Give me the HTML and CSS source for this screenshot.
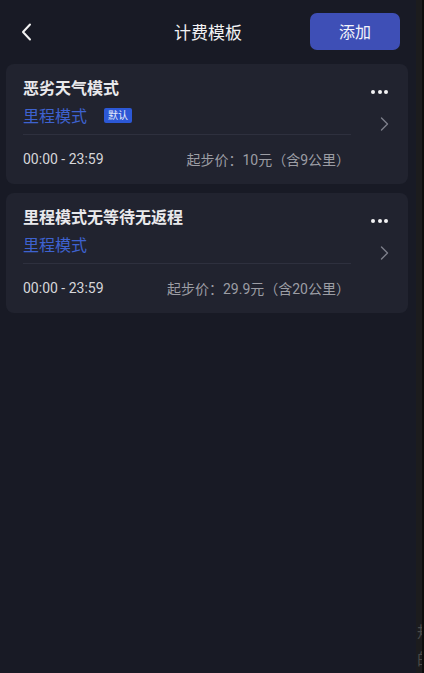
FILE: index.html
```html
<!DOCTYPE html>
<html lang="zh">
<head>
<meta charset="utf-8">
<link rel="stylesheet" href="styles.css">
</head>
<body>
<div class="screen">
  <main class="app">
    <header class="topbar">
      <div class="back">
        <svg width="12" height="18" viewBox="0 0 12 18"><path d="M10 1.5 L3 9 L10 16.5" fill="none" stroke="#f2f2f2" stroke-width="2" stroke-linecap="round" stroke-linejoin="round"/></svg>
      </div>
      <h1 class="title">计费模板</h1>
      <button class="add">添加</button>
    </header>

    <section class="list">
      <article class="card">
        <div class="content">
          <div class="name">恶劣天气模式</div>
          <div class="mode"><span>里程模式</span><span class="badge">默认</span></div>
          <div class="divider"></div>
          <div class="meta"><span class="time">00:00 - 23:59</span><span class="price">起步价：10元（含9公里）</span></div>
        </div>
        <div class="side">
          <div class="dots"><i></i><i></i><i></i></div>
          <svg class="chev" width="9" height="14" viewBox="0 0 9 14"><path d="M1.5 1 L7.5 7 L1.5 13" fill="none" stroke="#7d7f8a" stroke-width="1.4" stroke-linecap="round" stroke-linejoin="round"/></svg>
        </div>
      </article>

      <article class="card">
        <div class="content">
          <div class="name">里程模式无等待无返程</div>
          <div class="mode"><span>里程模式</span></div>
          <div class="divider"></div>
          <div class="meta"><span class="time">00:00 - 23:59</span><span class="price">起步价：29.9元（含20公里）</span></div>
        </div>
        <div class="side">
          <div class="dots"><i></i><i></i><i></i></div>
          <svg class="chev" width="9" height="14" viewBox="0 0 9 14"><path d="M1.5 1 L7.5 7 L1.5 13" fill="none" stroke="#7d7f8a" stroke-width="1.4" stroke-linecap="round" stroke-linejoin="round"/></svg>
        </div>
      </article>
    </section>
  </main>
  <aside class="strip">
    <div class="ghost">规<br>的<br>二</div>
  </aside>
</div>
</body>
</html>
```

FILE: styles.css
```css
* { box-sizing: border-box; }
html, body { margin: 0; padding: 0; }
body {
  width: 424px;
  height: 673px;
  overflow: hidden;
  background: #181a25;
  font-family: Roboto, "Noto Sans CJK SC", sans-serif;
}
.screen {
  display: flex;
  height: 673px;
}
.app {
  width: 416px;
  flex: none;
  background: #181a25;
}
.strip {
  flex: 1;
  background: #1c1c1e;
  border-right: 2px solid #0d0d0d;
  overflow: hidden;
  display: flex;
  flex-direction: column;
  justify-content: flex-end;
}
.ghost {
  color: #4a4a4a;
  font-size: 16px;
  line-height: 27px;
  padding-left: 1px;
  margin-bottom: -26px;
  font-family: "Noto Sans CJK SC", sans-serif;
}
.topbar {
  height: 64px;
  display: grid;
  grid-template-columns: 100px 1fr 100px;
  align-items: center;
  padding-bottom: 1px;
}
.back {
  padding-left: 20px;
  display: flex;
  align-items: center;
  padding-top: 1px;
}
.title {
  margin: 0;
  text-align: center;
  font-size: 17px;
  font-weight: 400;
  color: #f2f2f4;
  letter-spacing: 0;
}
.add {
  justify-self: end;
  margin-right: 16px;
  width: 90px;
  height: 37px;
  border: 0;
  border-radius: 7px;
  background: #3e4fb6;
  color: #f4f5fb;
  font-size: 16px;
  font-family: "Noto Sans CJK SC", sans-serif;
  margin-top: -1px;
}
.list {
  display: flex;
  flex-direction: column;
  gap: 9px;
  padding: 0 8px 0 6px;
}
.card {
  background: #21232f;
  border-radius: 8px;
  height: 120px;
  display: grid;
  grid-template-columns: 345px 1fr;
  padding-left: 17px;
}
.content {
  padding-top: 14px;
  display: flex;
  flex-direction: column;
}
.name {
  font-size: 16px;
  line-height: 22px;
  font-weight: 700;
  color: #e9e9ec;
}
.mode {
  margin-top: 3px;
  height: 24px;
  display: flex;
  align-items: center;
  font-size: 16px;
  color: #3e62cf;
}
.badge {
  margin-left: 17px;
  width: 28px;
  height: 15px;
  border-radius: 2px;
  background: #2c58d6;
  color: #e8ecfa;
  font-size: 10px;
  line-height: 15px;
  text-align: center;
  margin-top: 1px;
}
.divider {
  margin-top: 7px;
  width: 328px;
  height: 1px;
  background: #2e303e;
}
.meta {
  width: 327px;
  flex: 1;
  display: flex;
  align-items: center;
  justify-content: space-between;
  font-size: 14px;
  padding-bottom: 1px;
}
.time { color: #d6d6da; }
.price { color: #9c9da4; }
.side {
  display: grid;
  grid-template-rows: 1fr auto 1fr;
  justify-items: start;
}
.dots {
  display: flex;
  gap: 2.5px;
  padding-left: 3px;
  padding-top: 26px;
}
.dots i {
  width: 4px;
  height: 4px;
  border-radius: 50%;
  background: #f2f2f4;
}
.chev {
  grid-row: 2;
  margin-left: 12px;
}
```
